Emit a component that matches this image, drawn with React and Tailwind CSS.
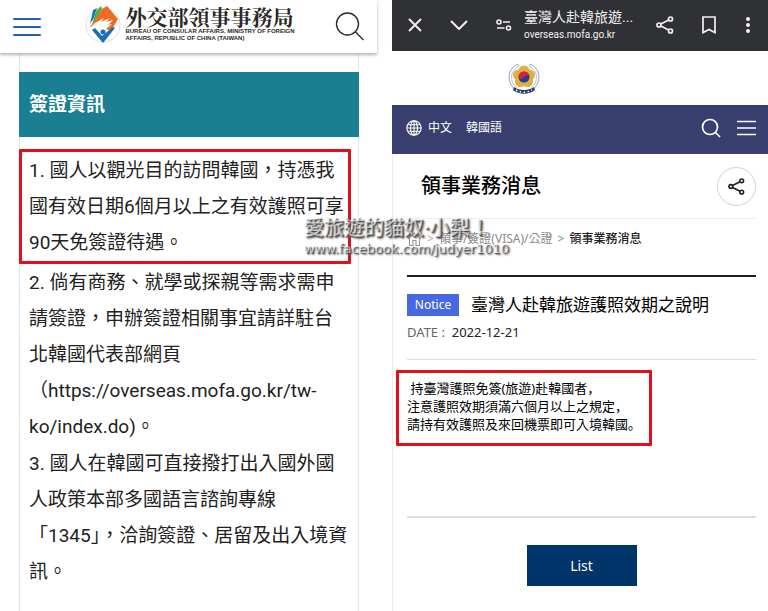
import React from "react";

const sansTC = "font-['Roboto','Noto_Sans_CJK_TC',sans-serif]";
const sansKR = "font-['Noto_Sans','Noto_Sans_CJK_KR',sans-serif]";

const entries = [
  {
    marked: true,
    lines: ["1. 國人以觀光目的訪問韓國，持憑我", "國有效日期6個月以上之有效護照可享", "90天免簽證待遇。"],
  },
  {
    lines: [
      "2. 倘有商務、就學或探親等需求需申",
      "請簽證，申辦簽證相關事宜請詳駐台",
      "北韓國代表部網頁",
      "（https://overseas.mofa.go.kr/tw-",
      "ko/index.do)。",
    ],
  },
  {
    lines: [
      "3. 國人在韓國可直接撥打出入國外國",
      "人政策本部多國語言諮詢專線",
      "「1345」，洽詢簽證、居留及出入境資",
      "訊。",
    ],
  },
];

function BureauLogo() {
  return (
    <svg viewBox="0 0 36 38" className="h-[38px] w-9 shrink-0" aria-hidden="true">
      <circle cx="18" cy="20" r="17" fill="#fff" stroke="#dddfe0" strokeWidth="1" />
      <path d="M5 19 8 5 12 3 9 13Z" fill="#1c78bd" />
      <path d="M7 20 11 6 16 1 17 4 10 17Z" fill="#55b043" />
      <path d="M8 18 17 4 22 1 33 14 26 26 21 24 14 22 11 18 7 23 5 22Z" fill="#ee6b26" />
      <path d="M5 23 10 18 19 13 16 17 25 13 21 17 28 15 23 20 27 19 21 24 15 24 11 21 7 25Z" fill="#fff" />
      <path d="M7 25 10 23 17 31 28 22 30 23 18 38Z" fill="#176fb8" />
      <circle cx="18" cy="27" r="2.5" fill="#176fb8" />
    </svg>
  );
}

function BureauHeader() {
  return (
    <header className="relative flex h-[53px] items-center justify-between bg-white pr-3 pl-[13px] shadow-[0_2px_3px_rgba(80,90,110,0.45)]">
      <button type="button" aria-label="選單" className="flex w-7 flex-col gap-1.5">
        <span className="h-0.5 rounded bg-[#1f63b4]" />
        <span className="h-0.5 rounded bg-[#1f63b4]" />
        <span className="h-0.5 rounded bg-[#1f63b4]" />
      </button>
      <a href="#bureau" className="flex items-center gap-1 pb-1.5 pl-1 text-[#2b2826]">
        <BureauLogo />
        <span className="flex flex-col gap-0.5 whitespace-nowrap">
          <span className="font-['Noto_Serif_CJK_TC','Noto_Sans_CJK_TC',serif] text-[21px] leading-5 font-bold">外交部領事事務局</span>
          <span className="font-['Liberation_Sans',sans-serif] text-[6px] leading-[7px] font-bold">
            BUREAU OF CONSULAR AFFAIRS, MINISTRY OF FOREIGN
            <br />
            AFFAIRS, REPUBLIC OF CHINA (TAIWAN)
          </span>
        </span>
      </a>
      <button type="button" aria-label="搜尋">
        <svg viewBox="0 0 30 30" className="size-[30px]" fill="none" stroke="#2b2b2b" strokeWidth="1.4">
          <circle cx="12.500" cy="12" r="11" />
          <path d="m20.500 20 8 8" />
        </svg>
      </button>
    </header>
  );
}

function BureauPage() {
  return (
    <section className={`${sansTC} min-w-0`}>
      <BureauHeader />
      <article className="mr-[18px] ml-[19px] min-h-[558px] border-x border-[#e3e4ea] pt-[19px]">
        <h1 className="-mx-px bg-[#1a7f92] px-2.5 py-[18px] text-[19px] leading-[29px] font-bold text-white">簽證資訊</h1>
        <div className="flex flex-col gap-px pt-3 text-[19px] leading-9 whitespace-nowrap text-[#222]">
          {entries.map((entry) => (
            <p
              key={entry.lines[0]}
              className={entry.marked ? "-ml-px mr-[7px] rounded-[1px] border-3 border-[#e01019] pt-px pl-[7px]" : "pl-[9px]"}
            >
              {entry.lines.map((line) => (
                <span key={line} className="block">{line}</span>
              ))}
            </p>
          ))}
        </div>
      </article>
    </section>
  );
}

function ShareIcon({ className }) {
  return (
    <svg viewBox="0 0 18 18" className={className} fill="none" stroke="currentColor" strokeWidth="1.7" aria-hidden="true">
      <circle cx="3" cy="9" r="2" />
      <circle cx="14.500" cy="3" r="2" />
      <circle cx="14.500" cy="15" r="2" />
      <path d="m4.800 8 7.900-4.100M4.800 10l7.900 4.100" />
    </svg>
  );
}

function BrowserBar() {
  return (
    <div className="flex h-[51px] items-center bg-[#303135] pr-[18px] pb-0.5 pl-4 text-[#f1f1f1]">
      <button type="button" aria-label="關閉">
        <svg viewBox="0 0 14 14" className="size-3.5" stroke="currentColor" strokeWidth="1.9"><path d="m1 1 12 12M13 1 1 13" /></svg>
      </button>
      <button type="button" aria-label="收合" className="ml-7">
        <svg viewBox="0 0 18 10" className="h-2.5 w-[18px]" fill="none" stroke="currentColor" strokeWidth="2"><path d="m1 1 8 8 8-8" /></svg>
      </button>
      <button type="button" aria-label="網站資訊" className="ml-7">
        <svg viewBox="0 0 16 12" className="h-3 w-4" fill="none" stroke="currentColor" strokeWidth="1.600">
          <circle cx="3" cy="3" r="2" />
          <circle cx="12.500" cy="9" r="2" />
          <path d="M7 3h7M1 9h7.500" />
        </svg>
      </button>
      <div className="ml-3 flex min-w-0 flex-1 flex-col whitespace-nowrap">
        <span className={`${sansTC} text-[14px] leading-5`}>臺灣人赴韓旅遊...</span>
        <span className="font-['Roboto',sans-serif] text-[10px] leading-4">overseas.mofa.go.kr</span>
      </div>
      <button type="button" aria-label="分享"><ShareIcon className="size-[18px]" /></button>
      <button type="button" aria-label="書籤" className="ml-7">
        <svg viewBox="0 0 14 18" className="h-[18px] w-3.5" fill="none" stroke="currentColor" strokeWidth="1.7"><path d="M1 1h12v15.500l-6-3-6 3Z" /></svg>
      </button>
      <button type="button" aria-label="更多" className="ml-[30px]">
        <svg viewBox="0 0 4 16" className="h-4 w-1" fill="currentColor"><circle cx="2" cy="2" r="2" /><circle cx="2" cy="8" r="2" /><circle cx="2" cy="14" r="2" /></svg>
      </button>
    </div>
  );
}

function Emblem() {
  return (
    <svg viewBox="0 0 32 32" className="size-8" aria-hidden="true">
      <path d="M10 2C-2 7-1 22 8 28M22 2c12 5 11 20 2 26" fill="none" stroke="#8fa0bd" strokeWidth="1" />
      <path d="M11 4C2 8 1 20 9 26M21 4c9 4 10 16 2 22M10 2l1 2M22 2l-1 2" fill="none" stroke="#b4c0d4" strokeWidth="1" />
      <g fill="#deb042">
        <circle cx="16" cy="9" r="5.500" />
        <circle cx="21.500" cy="13" r="5.500" />
        <circle cx="19.500" cy="19.500" r="5.500" />
        <circle cx="12.500" cy="19.500" r="5.500" />
        <circle cx="10.500" cy="13" r="5.500" />
      </g>
      <circle cx="16" cy="15" r="5.500" fill="#243f94" />
      <path d="M10.500 15a5.500 5.500 0 0 1 11 0c-1.500-2-4-2-5.500 0s-4 2-5.500 0Z" fill="#dc2331" />
      <path d="M6 25c5 4 15 4 20 0l1 3c-6 5-16 5-22 0Z" fill="#263d78" />
      <path d="M8 28c5 3 11 3 16 0" fill="none" stroke="#fff" strokeWidth="1.500" strokeDasharray="1.500 2.500" />
    </svg>
  );
}

function SiteNav() {
  return (
    <nav className="flex h-[49px] items-center bg-[#383f6e] pr-3 pb-1 pl-3.5 text-[12px] text-white">
      <svg viewBox="0 0 16 16" className="size-4" fill="none" stroke="currentColor" strokeWidth="1.100" aria-hidden="true">
        <circle cx="8" cy="8" r="7.200" />
        <ellipse cx="8" cy="8" rx="3.500" ry="7.200" />
        <path d="M8 1v14M1 8h14M2 4.700h12M2 11.300h12" />
      </svg>
      <a href="#zh" className="ml-1.5">中文</a>
      <a href="#ko" className="ml-3.5">韓國語</a>
      <button type="button" aria-label="搜尋" className="ml-auto">
        <svg viewBox="0 0 20 20" className="size-5" fill="none" stroke="currentColor" strokeWidth="1.700"><circle cx="9" cy="9" r="7.500" /><path d="m14.500 14.500 4.500 4.500" /></svg>
      </button>
      <button type="button" aria-label="選單" className="ml-4">
        <svg viewBox="0 0 19 16" className="h-4 w-[19px]" stroke="currentColor" strokeWidth="1.600"><path d="M0 1.500h19M0 8h19M0 14.500h19" /></svg>
      </button>
    </nav>
  );
}

function NoticePage() {
  return (
    <section className={`${sansKR} min-w-0 text-[#222]`}>
      <BrowserBar />
      <div className="flex h-[54px] items-center justify-center pr-[112px]"><a href="#home" aria-label="首頁"><Emblem /></a></div>
      <SiteNav />
      <div className="min-h-[457px] border-l border-[#ececf0] pr-3 pl-3.5">
        <div className="flex h-[65px] items-center justify-between border-b border-[#ededed] pl-3.5">
          <h1 className="text-[20px] font-medium text-black">領事業務消息</h1>
          <button type="button" aria-label="分享" className="flex size-[39px] items-center justify-center rounded-full border border-[#d2d2d2]">
            <ShareIcon className="size-[17px]" />
          </button>
        </div>
        <div className="flex h-10 items-center gap-[5px] text-[12px] whitespace-nowrap text-[#888]">
          <a href="#home" aria-label="首頁">
            <svg viewBox="0 0 15 14" className="h-3.5 w-[15px]" fill="none" stroke="#999" strokeWidth="1.200"><path d="M1 6.500 7.500 1 14 6.500M2.500 5.500v8h3.500v-5h3v5h3.500v-8" /></svg>
          </a>
          <span className="text-[#aaa]">&gt;</span>
          <a href="#visa">領事/簽證(VISA)/公證</a>
          <span>&gt;</span>
          <span className="font-medium text-[#222]">領事業務消息</span>
        </div>
        <div className="mt-4 border-t-2 border-[#1c1c1c] pt-[15px]">
          <div className="flex items-center gap-3 whitespace-nowrap">
            <span className="w-[52px] bg-[#4867e2] text-center text-[12px] leading-[22px] text-white">Notice</span>
            <h2 className="text-[17px] leading-[26px] text-black">臺灣人赴韓旅遊護照效期之說明</h2>
          </div>
          <p className="mt-1 text-[13px] leading-[21px] text-[#666]">DATE :&nbsp; <span className="text-[#222]">2022-12-21</span></p>
        </div>
        <div className="mt-4 border-t border-b-2 border-[#dcdcdc] pt-2.5 pb-[70px]">
          <p className="-ml-[11px] w-[256px] rounded-[1px] border-3 border-[#e01019] px-2 pt-1.5 pb-2.5 text-[13px] leading-[18px] whitespace-nowrap text-black">
            &nbsp;持臺灣護照免簽(旅遊)赴韓國者，
            <br />
            注意護照效期須滿六個月以上之規定，
            <br />
            請持有效護照及來回機票即可入境韓國。
          </p>
        </div>
        <div className="flex justify-center pt-[27px]">
          <button type="button" className="h-[41px] w-[110px] bg-[#00356a] text-[14px] text-white">List</button>
        </div>
      </div>
    </section>
  );
}

function Watermark() {
  return (
    <div className="pointer-events-none absolute top-[217px] left-[304px] whitespace-nowrap text-white/60 [text-shadow:1px_1px_1px_#444,2px_2px_2px_#666]">
      <div className="font-['Roboto','Noto_Sans_CJK_TC',sans-serif] text-[20px] leading-[22px] font-medium">愛旅遊的貓奴·小梨！</div>
      <div className="font-['DejaVu_Sans',sans-serif] text-[13px] leading-5">www.facebook.com/judyer1010</div>
    </div>
  );
}

export default function App() {
  return (
    <main className="relative grid grid-cols-[377fr_376fr] gap-[15px] overflow-hidden bg-white">
      <BureauPage />
      <NoticePage />
      <Watermark />
    </main>
  );
}
